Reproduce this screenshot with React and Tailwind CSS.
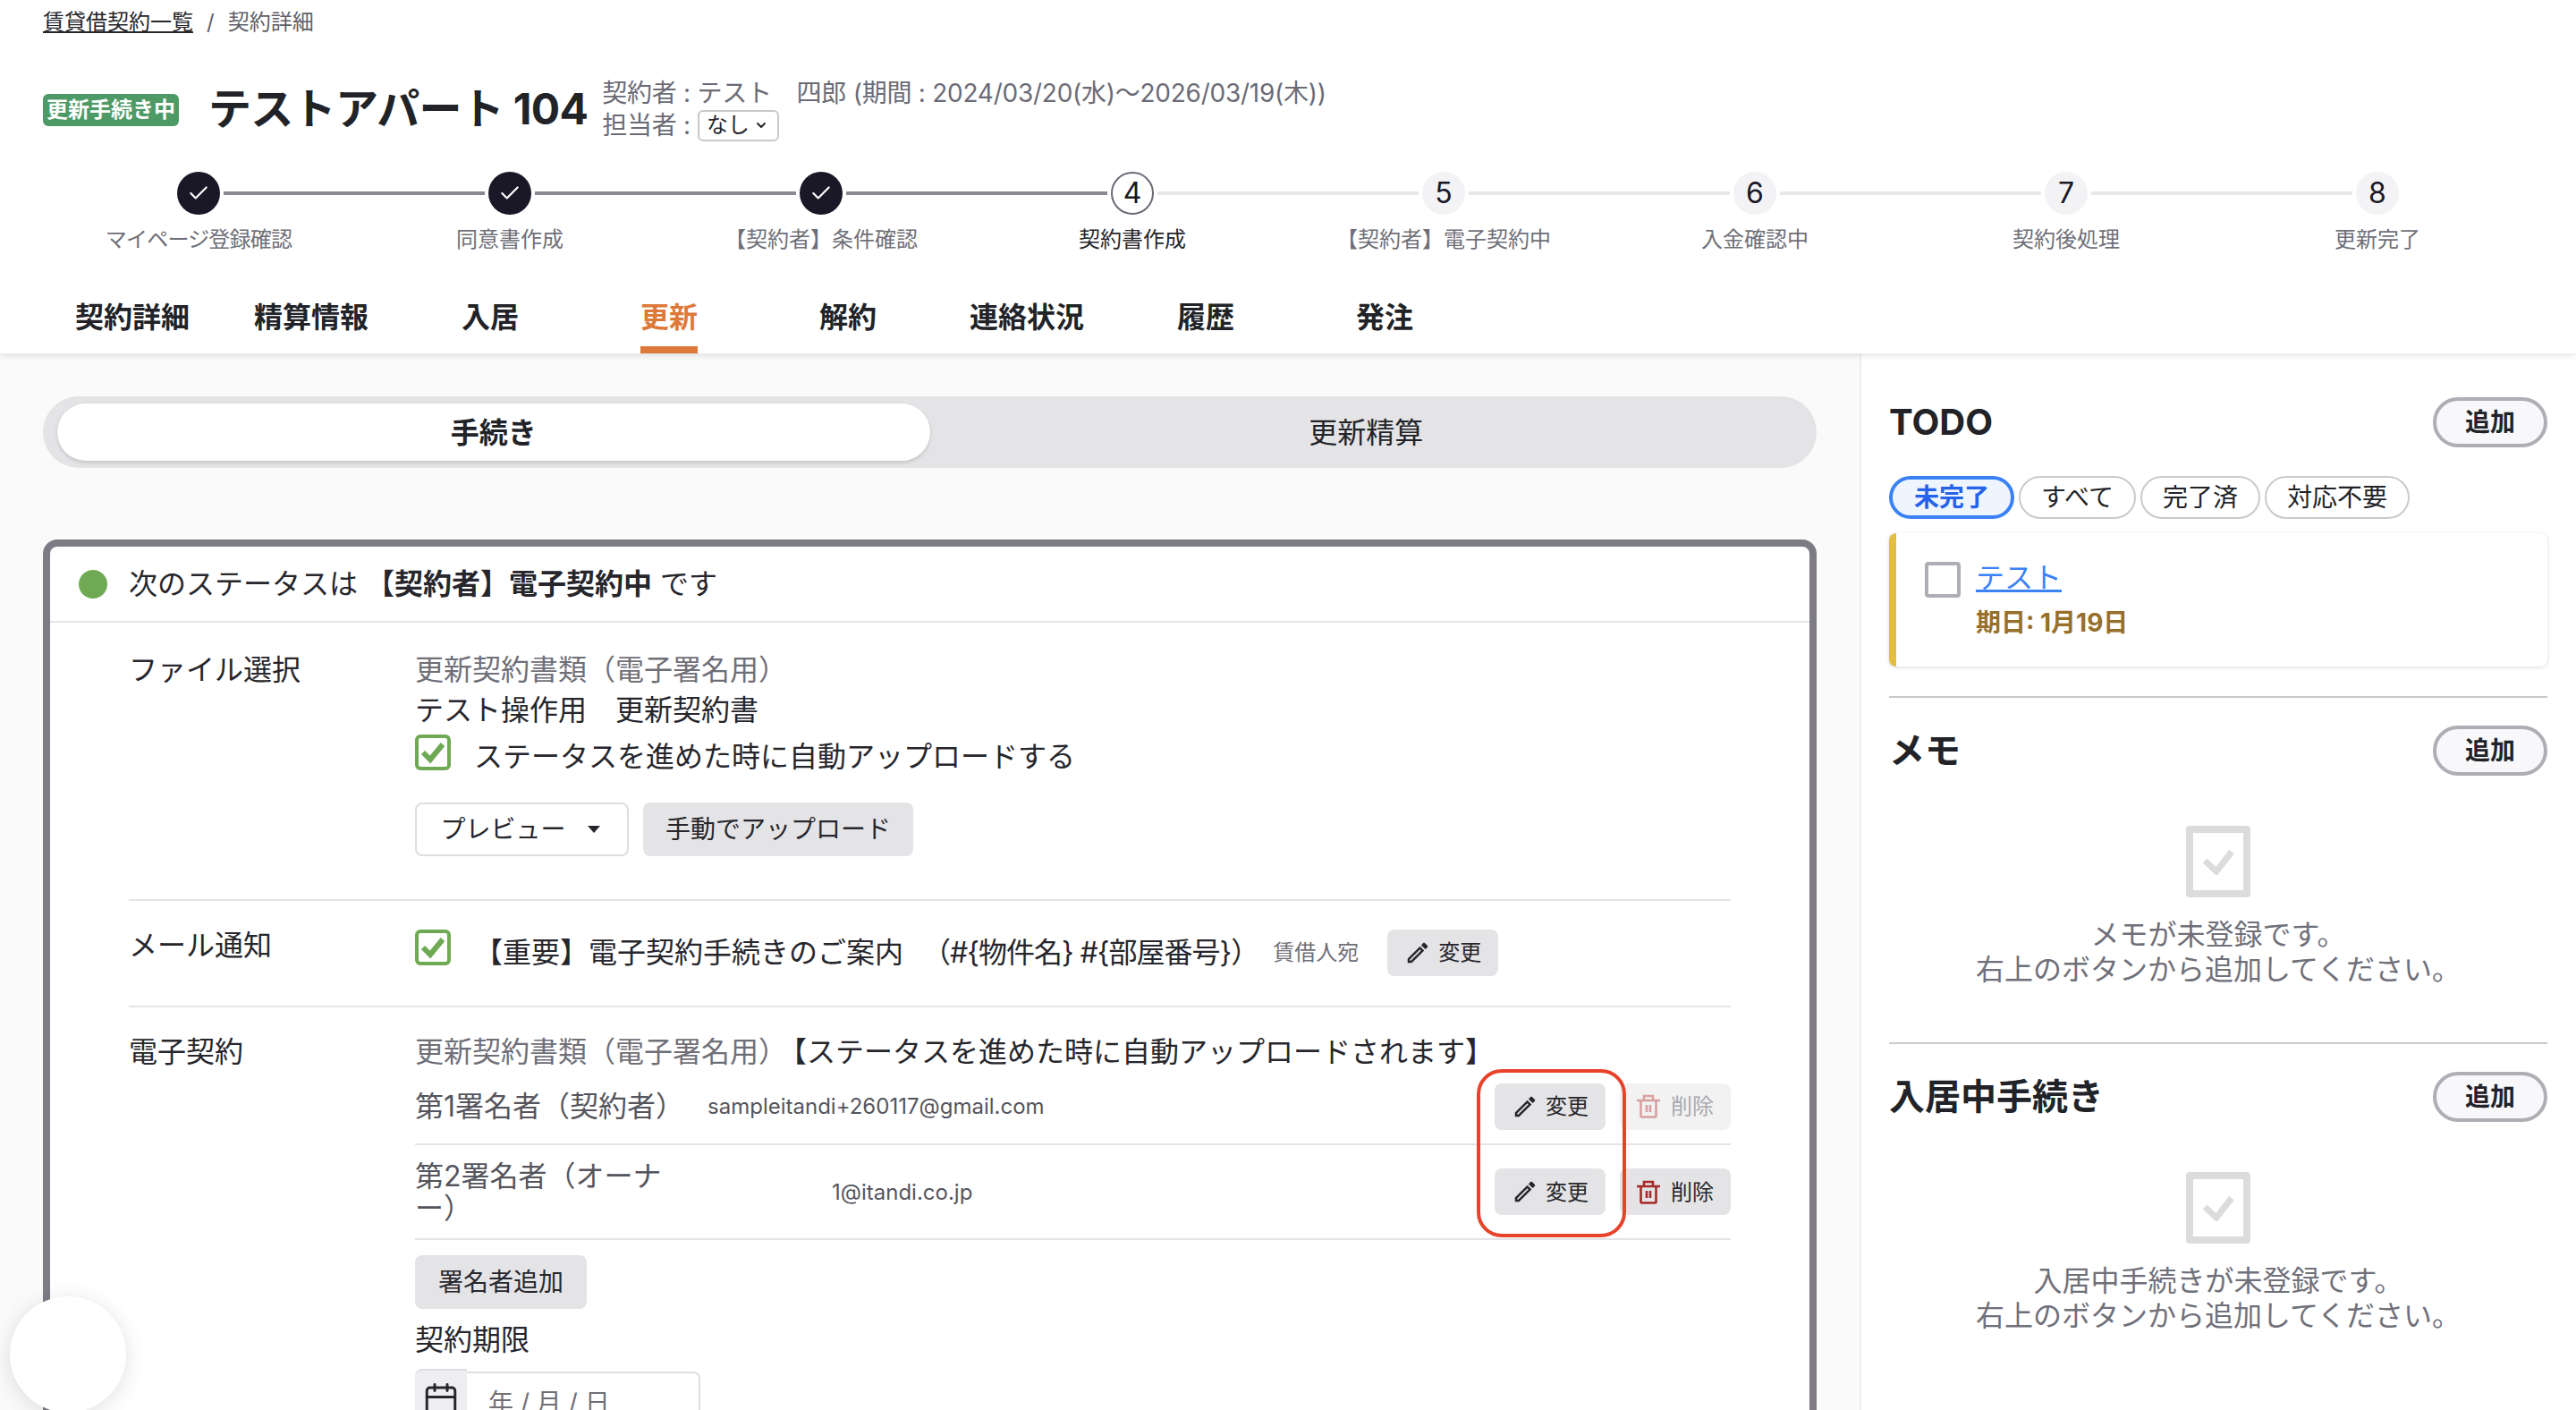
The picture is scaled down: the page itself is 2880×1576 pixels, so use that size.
import { Check, ChevronDown, Calendar } from 'lucide-react'

const STEPS = [
  { label: 'マイページ登録確認', state: 'done' },
  { label: '同意書作成', state: 'done' },
  { label: '【契約者】条件確認', state: 'done' },
  { label: '契約書作成', state: 'current' },
  { label: '【契約者】電子契約中', state: 'todo' },
  { label: '入金確認中', state: 'todo' },
  { label: '契約後処理', state: 'todo' },
  { label: '更新完了', state: 'todo' },
]

const TABS = ['契約詳細', '精算情報', '入居', '更新', '解約', '連絡状況', '履歴', '発注']

const FILTERS = [
  { label: '未完了', active: true },
  { label: 'すべて' },
  { label: '完了済' },
  { label: '対応不要' },
]

const grayBtn = 'flex items-center justify-center rounded-lg bg-[#e4e4e6] text-[#26262c]'

function Stepper() {
  return (
    <div className="mt-8 grid grid-cols-8 px-12">
      {STEPS.map((step, i) => {
        const leftDone = i <= 3
        const rightDone = i < 3
        return (
          <div key={step.label} className="flex flex-col items-center">
            <div className="flex w-full items-center gap-1">
              <div className={`h-1 flex-1 ${i === 0 ? '' : leftDone ? 'bg-[#8a8892]' : 'bg-[#e8e8ea]'}`} />
              {step.state === 'done' && (
                <div className="flex h-12 w-12 items-center justify-center rounded-full bg-[#1a1826]">
                  <Check size={26} strokeWidth={2} className="text-white" />
                </div>
              )}
              {step.state === 'current' && (
                <div className="flex h-12 w-12 items-center justify-center rounded-full border-2 border-[#6b6b76] bg-white text-[32px] text-[#1a1826]">{i + 1}</div>
              )}
              {step.state === 'todo' && (
                <div className="flex h-12 w-12 items-center justify-center rounded-full bg-[#f3f3f5] text-[32px] text-[#1a1826]">{i + 1}</div>
              )}
              <div className={`h-1 flex-1 ${i === 7 ? '' : rightDone ? 'bg-[#8a8892]' : 'bg-[#e8e8ea]'}`} />
            </div>
            <div className={`mt-2.5 text-[24px] leading-[36px] ${step.state === 'current' ? 'text-[#26262c]' : 'text-[#6f6f78]'} ${i === 0 ? 'tracking-[-0.8px]' : ''}`}>{step.label}</div>
          </div>
        )
      })}
    </div>
  )
}

function Header() {
  return (
    <header className="relative z-10 h-[395px] bg-white shadow-[0_2px_8px_rgba(0,0,0,0.12)]">
      <div className="flex h-[50px] items-center pl-12 text-[24px] text-[#5f5f68]">
        <span className="text-[#26262c] underline">賃貸借契約一覧</span>
        <span className="mx-[15px]">/</span>
        <span>契約詳細</span>
      </div>
      <div className="mt-[34px] flex h-[76px] items-center pl-12">
        <span className="mt-[2px] rounded-md bg-[#4e9a66] px-1 text-[24px] leading-[36px] font-bold whitespace-nowrap text-white">更新手続き中</span>
        <h1 className="ml-[33px] text-[48px] font-bold tracking-[-0.7px] text-[#212328]">テストアパート 104</h1>
        <div className="ml-[16px] text-[28px] leading-[36px] tracking-[-0.25px] text-[#6b6b76]">
          <div>契約者 : テスト　四郎 (期間 : 2024/03/20(水)〜2026/03/19(木))</div>
          <div className="flex items-center">
            担当者 :
            <span className="ml-2 flex h-[35px] w-[91px] items-center gap-1.5 rounded-md border-2 border-[#c8c8cc] bg-white pl-2 text-[24px] text-[#26262c]">
              なし <ChevronDown size={16} strokeWidth={3} />
            </span>
          </div>
        </div>
      </div>
      <Stepper />
      <nav className="mt-[29px] flex pl-12">
        {TABS.map((tab) => (
          <div key={tab} className="flex h-20 w-[200px] justify-center">
            <span className={`flex h-full items-center border-b-8 pt-2 text-[32px] font-bold ${tab === '更新' ? 'border-[#dd7a3a] text-[#dd7a3a]' : 'border-transparent text-[#212328]'}`}>{tab}</span>
          </div>
        ))}
      </nav>
    </header>
  )
}

function GreenCheck() {
  return (
    <span className="flex h-10 w-10 shrink-0 items-center justify-center rounded-md border-4 border-[#6fa954] bg-white">
      <svg width="28" height="26" viewBox="0 0 28 26" fill="none">
        <path d="M3 13l8 8L25 4" stroke="#6fa954" strokeWidth="6" />
      </svg>
    </span>
  )
}

function PencilIcon() {
  return (
    <svg width="30" height="30" viewBox="0 0 24 24" fill="currentColor">
      <path d="M3 17.25V21h3.75L17.81 9.94l-3.75-3.75L3 17.25zM5.92 19H5v-.92l9.06-9.06.92.92L5.92 19zM20.71 5.63l-2.34-2.34c-.2-.2-.45-.29-.71-.29s-.51.1-.7.29l-1.83 1.83 3.75 3.75 1.83-1.83c.39-.39.39-1.02 0-1.41z" />
    </svg>
  )
}

function TrashIcon({ className }) {
  return (
    <svg width="26" height="27" viewBox="0 0 26 27" fill="none" stroke="currentColor" strokeWidth="2.6" className={className}>
      <path d="M0 7h26M8 7V2h10v5M4.5 7v17.5a1 1 0 001 1h15a1 1 0 001-1V7M11 12v8M15 12v8" />
    </svg>
  )
}

function EditBtn() {
  return (
    <button type="button" className={`${grayBtn} h-[52px] w-[124px] gap-2 text-[24px]`}>
      <PencilIcon /> 変更
    </button>
  )
}

function DeleteBtn({ disabled }) {
  return (
    <button type="button" className={`flex h-[52px] w-[124px] items-center justify-center gap-3 rounded-lg text-[24px] ${disabled ? 'bg-[#f2f2f3] text-[#a8a8ae]' : 'bg-[#e4e4e6] text-[#26262c]'}`}>
      <TrashIcon className={disabled ? 'text-[#d9a0a0]' : 'text-[#a52a2a]'} /> 削除
    </button>
  )
}

function FileRow() {
  return (
    <div className="flex border-b-2 border-[#e4e4e6] pt-[30px] pb-12">
      <div className="w-[320px] shrink-0 text-[32px] leading-[45px]">ファイル選択</div>
      <div className="text-[32px] leading-[45px]">
        <div className="text-[#6f6f78]">更新契約書類（電子署名用）</div>
        <div>テスト操作用　更新契約書</div>
        <div className="flex items-start">
          <span className="mt-[5px]"><GreenCheck /></span>
          <span className="ml-[26px] pt-[7px]">ステータスを進めた時に自動アップロードする</span>
        </div>
        <div className="mt-[29px] flex gap-4 text-[28px]">
          <button type="button" className="flex h-[60px] w-[239px] items-center justify-center gap-6 rounded-lg border-2 border-[#dedee0] bg-white pr-1 text-[#26262c]">
            プレビュー
            <span className="h-0 w-0 border-x-[7px] border-t-[8px] border-x-transparent border-t-[#26262c]" />
          </button>
          <button type="button" className={`${grayBtn} h-[60px] w-[302px]`}>手動でアップロード</button>
        </div>
      </div>
    </div>
  )
}

function MailRow() {
  return (
    <div className="flex border-b-2 border-[#e4e4e6] pt-8 pb-[33px]">
      <div className="-mt-[5px] w-[320px] shrink-0 text-[32px] leading-[45px]">メール通知</div>
      <div className="flex h-[52px] items-center">
        <span className="self-start"><GreenCheck /></span>
        <span className="ml-[26px] text-[32px]">
          【重要】電子契約手続きのご案内
          <span className="ml-[21px] tracking-[-1px]">（#{'{'}物件名{'}'} #{'{'}部屋番号{'}'}）</span>
        </span>
        <span className="ml-[16px] text-[24px] text-[#6f6f78]">賃借人宛</span>
        <span className="ml-8"><EditBtn /></span>
      </div>
    </div>
  )
}

function SignerRows() {
  return (
    <div className="relative">
      <div className="flex h-[82px] items-center border-b-2 border-[#e4e4e6] pb-[3px] text-[#55555d]">
        <span className="text-[32px] whitespace-nowrap">第1署名者（契約者）</span>
        <span className="ml-[26px] text-[24px]">sampleitandi+260117@gmail.com</span>
        <div className="ml-auto flex gap-4"><EditBtn /><DeleteBtn disabled /></div>
      </div>
      <div className="flex h-[106px] items-center border-b-2 border-[#e4e4e6] text-[#55555d]">
        <span className="w-[280px] pt-[2px] text-[32px] leading-[36px]">第2署名者（オーナー）</span>
        <span className="ml-[186px] text-[24px]">1@itandi.co.jp</span>
        <div className="ml-auto flex gap-4"><EditBtn /><DeleteBtn /></div>
      </div>
      {/* annotation drawn over the screenshot */}
      <div className="absolute -top-[3px] right-[117px] h-[188px] w-[167px] rounded-[28px] border-4 border-[#e8432a]" />
    </div>
  )
}

function SignRow() {
  return (
    <div className="flex pt-[27px]">
      <div className="w-[320px] shrink-0 text-[32px] leading-[45px]">電子契約</div>
      <div className="flex-1 text-[32px] leading-[45px]">
        <div>
          <span className="text-[#6f6f78]">更新契約書類（電子署名用）</span>
          <span className="ml-[6px]">【ステータスを進めた時に自動アップロードされます】</span>
        </div>
        <SignerRows />
        <button type="button" className={`${grayBtn} mt-[17px] h-[60px] w-[192px] text-[28px]`}>署名者追加</button>
        <div className="mt-[12px]">契約期限</div>
        <div className="mt-[10px] flex w-[319px] items-start">
          <span className="flex h-[80px] w-[58px] justify-center rounded-tl-lg border-t-2 border-[#dedee0] bg-[#eeeef2] pt-3">
            <Calendar size={42} strokeWidth={1.7} className="text-[#26262c]" />
          </span>
          <span className="mt-[3px] h-[80px] flex-1 rounded-tr-lg border-t-2 border-r-2 border-[#dedee0] pl-6 text-[28px] leading-[66px] text-[#6f6f78]">年 / 月 / 日</span>
        </div>
      </div>
    </div>
  )
}

function LeftPane() {
  return (
    <div className="w-[2079px] shrink-0 bg-[#fafafa] px-12 pt-12">
      <div className="flex h-20 rounded-full bg-[#e4e4e6] px-4 py-2 text-[32px] text-[#212328]">
        <div className="flex flex-1 items-center justify-center rounded-full bg-white pt-[2px] font-bold shadow-[0_2px_4px_rgba(0,0,0,0.15)]">手続き</div>
        <div className="flex flex-1 items-center justify-center pt-[2px]">更新精算</div>
      </div>
      <div className="mt-20 rounded-2xl border-8 border-b-0 border-[#7e7b85] bg-white text-[#26262c]">
        <div className="flex h-[85px] items-center gap-6 border-b-2 border-[#e4e4e6] pl-8 text-[32px]">
          <span className="h-8 w-8 rounded-full bg-[#6fa954]" />
          <span>次のステータスは <b className="font-bold">【契約者】電子契約中</b> です</span>
        </div>
        <div className="px-[88px]">
          <FileRow />
          <MailRow />
          <SignRow />
        </div>
      </div>
    </div>
  )
}

function AddBtn() {
  return (
    <button type="button" className="h-14 w-[128px] rounded-full border-4 border-[#aeaeb4] bg-[#f8f8fa] text-[28px] font-bold text-[#212328]">追加</button>
  )
}

function SectionHead({ title }) {
  return (
    <div className="flex h-14 items-center justify-between">
      <h2 className="text-[40px] leading-[56px] font-bold">{title}</h2>
      <AddBtn />
    </div>
  )
}

function EmptyState({ title }) {
  return (
    <div className="mt-14 flex flex-col items-center">
      <span className="flex h-20 w-[72px] items-center justify-center rounded-sm border-8 border-[#dcdcde]">
        <svg width="38" height="30" viewBox="0 0 38 30" fill="none">
          <path d="M4 14l13 12L34 4" stroke="#dcdcde" strokeWidth="7" />
        </svg>
      </span>
      <p className="mt-[22px] text-center text-[32px] leading-[39px] text-[#70707a]">
        {title}が未登録です。<br />右上のボタンから追加してください。
      </p>
    </div>
  )
}

function RightPane() {
  return (
    <aside className="flex-1 border-l-2 border-[#eeeeee] bg-white pt-[49px] pr-8 pl-[31px] text-[#212328]">
      <SectionHead title="TODO" />
      <div className="mt-8 flex gap-[5px] text-[28px] leading-[40px]">
        {FILTERS.map((f) => (
          <span key={f.label} className={`flex h-12 items-center rounded-full ${f.active ? 'border-4 border-[#3b82f6] bg-[#eef5ff] px-[24px] font-bold text-[#2563eb]' : 'border-2 border-[#cacaca] px-[23px]'}`}>{f.label}</span>
        ))}
      </div>
      <div className="mt-4 h-[149px] rounded-lg border-l-8 border-[#e2bd42] bg-white pt-8 pl-8 shadow-[0_1px_4px_rgba(0,0,0,0.15)]">
        <div className="flex items-start gap-[17px]">
          <span className="h-10 w-10 rounded border-4 border-[#aeaeb4]" />
          <a className="text-[32px] leading-[36px] text-[#3b82f6] underline">テスト</a>
        </div>
        <div className="mt-2.5 pl-[57px] text-[28px] leading-[36px] font-bold text-[#96702a]">期日: 1月19日</div>
      </div>
      <div className="mt-[33px] h-0.5 bg-[#cacaca]" />
      <div className="mt-[31px]"><SectionHead title="メモ" /></div>
      <EmptyState title="メモ" />
      <div className="mt-[62px] h-0.5 bg-[#cacaca]" />
      <div className="mt-[31px]"><SectionHead title="入居中手続き" /></div>
      <EmptyState title="入居中手続き" />
    </aside>
  )
}

export default function App() {
  return (
    <div className="relative h-[1576px] w-[2880px] overflow-hidden bg-white font-['Inter','Noto_Sans_CJK_JP',sans-serif]">
      <Header />
      <div className="flex h-[1181px]">
        <LeftPane />
        <RightPane />
      </div>
      {/* floating chat launcher, no icon loaded */}
      <div className="absolute top-[1449px] left-[11px] h-[130px] w-[130px] rounded-full bg-white shadow-[0_4px_24px_rgba(0,0,0,0.12)]" />
    </div>
  )
}
